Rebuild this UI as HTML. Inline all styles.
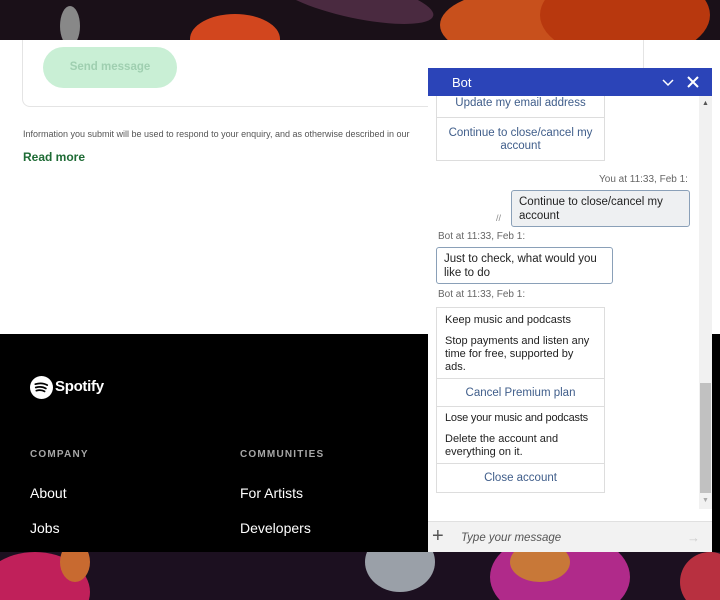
<!DOCTYPE html>
<html><head><meta charset="utf-8"><style>
*{margin:0;padding:0;box-sizing:border-box}
html,body{width:720px;height:600px;overflow:hidden}
body{position:relative;background:#fff;font-family:"Liberation Sans",sans-serif}
.abs{position:absolute}
.top{left:0;top:0;width:720px;height:40px;background:#1a1018;overflow:hidden;z-index:5}
.bot{left:0;top:552px;width:720px;height:48px;background:#1c1020;overflow:hidden}
.blob{position:absolute;border-radius:50%}
.foot{left:0;top:334px;width:720px;height:218px;background:#000}
.card{left:22px;top:20px;width:622px;height:87px;border:1px solid #e4e4e4;border-radius:8px;background:#fff}
.btn{left:43px;top:47px;width:134px;height:41px;border-radius:21px;background:#c9efd5;color:#9fcfb0;font-weight:bold;font-size:11.5px;text-align:center;line-height:41px}
.info{left:23px;top:129px;font-size:9px;color:#555;white-space:nowrap}
.rm{left:23px;top:150px;font-size:12px;font-weight:bold;color:#1e6b35}
.fh{font-size:10px;letter-spacing:1.2px;color:#a7a7a7;font-weight:bold}
.fl{font-size:14px;color:#fff}
.w{left:428px;top:68px;width:284px;height:484px;background:#fff}
.hdr{left:428px;top:68px;width:284px;height:28px;background:#2b44b8;color:#fff;font-size:13px;z-index:3}
.opt{position:absolute;left:436px;width:169px;border:1px solid #ddd;background:#fff;font-size:11px}
.c{color:#3f5d8a;text-align:center}
.t{color:#222;padding:0 8px}
.meta{position:absolute;font-size:10px;color:#666}
.bub{position:absolute;border:1px solid #8aa0b8;border-radius:3px;font-size:11.5px;line-height:14px;padding:4px 7px;color:#222}
</style></head><body>
<div class="abs top">
 <div class="blob" style="left:190px;top:14px;width:90px;height:50px;background:#d2461e"></div>
 <div class="blob" style="left:440px;top:-10px;width:160px;height:70px;background:#c8501c"></div>
 <div class="blob" style="left:540px;top:-30px;width:170px;height:90px;background:#b8380e"></div>
 <div class="blob" style="left:275px;top:-20px;width:160px;height:38px;background:#4a2a40;transform:rotate(12deg)"></div>
 <div class="blob" style="left:60px;top:6px;width:20px;height:40px;background:#888"></div>
</div>
<div class="abs card"></div>
<div class="abs btn">Send message</div>
<div class="abs info">Information you submit will be used to respond to your enquiry, and as otherwise described in our</div>
<div class="abs rm">Read more</div>
<div class="abs foot"></div>
<svg class="abs" style="left:30px;top:376px" width="23" height="23" viewBox="0 0 24 24"><circle cx="12" cy="12" r="12" fill="#fff"/><path d="M5.5 8.5c4-1.2 9-1 12.5 1M6 12c3.4-1 7.6-.8 10.6 1M6.6 15.3c2.8-.8 6.2-.6 8.6.8" stroke="#000" stroke-width="1.8" fill="none" stroke-linecap="round"/></svg>
<div class="abs" style="left:55px;top:378px;font-size:15px;font-weight:bold;color:#fff;letter-spacing:-.3px">Spotify</div>
<div class="abs fh" style="left:30px;top:449px">COMPANY</div>
<div class="abs fh" style="left:240px;top:449px">COMMUNITIES</div>
<div class="abs fl" style="left:30px;top:485px">About</div>
<div class="abs fl" style="left:30px;top:520px">Jobs</div>
<div class="abs fl" style="left:240px;top:485px">For Artists</div>
<div class="abs fl" style="left:240px;top:520px">Developers</div>
<div class="abs bot">
 <div class="blob" style="left:-20px;top:0;width:110px;height:80px;background:#c0205a"></div>
 <div class="blob" style="left:60px;top:-10px;width:30px;height:40px;background:#c86a30"></div>
 <div class="blob" style="left:365px;top:-20px;width:70px;height:60px;background:#9aa0a8"></div>
 <div class="blob" style="left:490px;top:-20px;width:140px;height:90px;background:#b02a8a"></div>
 <div class="blob" style="left:510px;top:-10px;width:60px;height:40px;background:#c87838"></div>
 <div class="blob" style="left:680px;top:0;width:60px;height:60px;background:#b83040"></div>
</div>
<div class="abs w"></div>
<div class="abs hdr"><span style="position:absolute;left:24px;top:7px">Bot</span>
<svg style="position:absolute;left:234px;top:9px" width="12" height="10" viewBox="0 0 12 10"><path d="M1 3l5 5 5-5" stroke="#fff" stroke-width="1.5" fill="none"/></svg>
<svg style="position:absolute;left:259px;top:8px" width="12" height="12" viewBox="0 0 12 12"><path d="M1 1l10 10M11 1L1 11" stroke="#fff" stroke-width="2"/></svg></div>
<div class="abs" style="left:699px;top:96px;width:13px;height:413px;background:#f1f1f1"></div>
<div class="abs" style="left:700px;top:383px;width:11px;height:110px;background:#c1c1c1"></div>
<div class="abs" style="left:702px;top:100px;font-size:7px;color:#555">▲</div>
<div class="abs" style="left:702px;top:497px;font-size:7px;color:#aaa">▼</div>
<div class="opt c" style="top:96px;height:22px;border-top:none;line-height:14px;font-size:11.5px">Update my email address</div>
<div class="opt c" style="top:117px;height:44px;padding-top:9px;line-height:13px;font-size:11.5px">Continue to close/cancel my account</div>
<div class="meta" style="left:599px;top:174px">You at 11:33, Feb 1:</div>
<div class="bub" style="left:511px;top:190px;width:179px;height:37px;background:#eef0f2">Continue to close/cancel my account</div>
<div class="meta" style="left:496px;top:213px;font-size:9px;color:#888">//</div>
<div class="meta" style="left:438px;top:231px">Bot at 11:33, Feb 1:</div>
<div class="bub" style="left:436px;top:247px;width:177px;height:37px;background:#fff">Just to check, what would you like to do</div>
<div class="meta" style="left:438px;top:289px">Bot at 11:33, Feb 1:</div>
<div class="opt" style="top:307px;height:72px;line-height:13px"><div class="t" style="padding-top:6px">Keep music and podcasts</div><div class="t" style="padding-top:8px">Stop payments and listen any time for free, supported by ads.</div></div>
<div class="opt c" style="top:378px;height:29px;line-height:28px;font-size:11.5px">Cancel Premium plan</div>
<div class="opt" style="top:406px;height:58px;line-height:13px"><div class="t" style="padding-top:5px;white-space:nowrap;letter-spacing:-.2px">Lose your music and podcasts</div><div class="t" style="padding-top:8px">Delete the account and everything on it.</div></div>
<div class="opt c" style="top:463px;height:30px;line-height:29px;font-size:11.5px">Close account</div>
<div class="abs" style="left:428px;top:521px;width:284px;height:31px;background:#f2f2f2;border-top:1px solid #e0e0e0"></div>
<div class="abs" style="left:432px;top:526px;font-size:20px;color:#555;line-height:20px">+</div>
<div class="abs" style="left:461px;top:532px;font-size:11.5px;font-style:italic;color:#555">Type your message</div>
<div class="abs" style="left:687px;top:530px;font-size:13px;color:#ccc">→</div>
</body></html>
